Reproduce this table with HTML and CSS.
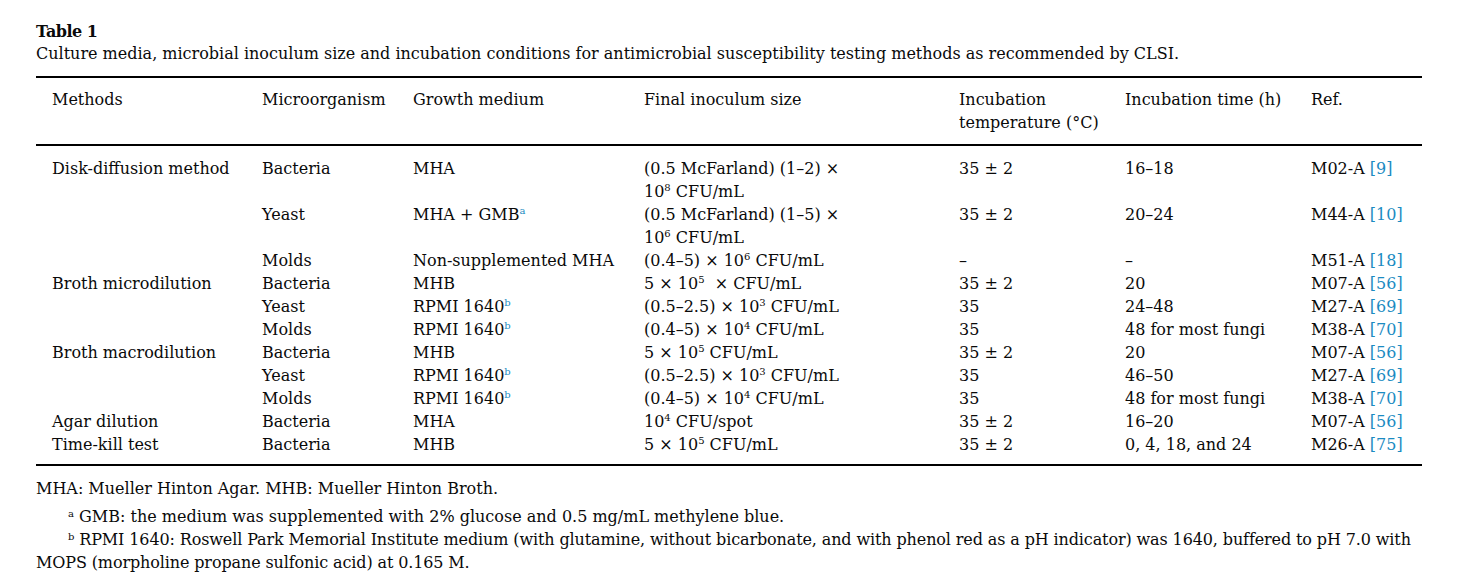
FILE: index.html
```html
<!DOCTYPE html>
<html lang="en">
<head>
<meta charset="utf-8">
<title>Table 1</title>
<link rel="stylesheet" href="styles.css">
</head>
<body>
<div class="page">
  <div class="title">Table 1</div>
  <div class="caption">Culture media, microbial inoculum size and incubation conditions for antimicrobial susceptibility testing methods as recommended by CLSI.</div>
  <table class="tbl">
    <colgroup>
      <col class="c1"><col class="c2"><col class="c3"><col class="c4"><col class="c5"><col class="c6"><col class="c7">
    </colgroup>
    <thead>
      <tr>
        <th class="first">Methods</th>
        <th>Microorganism</th>
        <th>Growth medium</th>
        <th>Final inoculum size</th>
        <th>Incubation<br>temperature (°C)</th>
        <th>Incubation time (h)</th>
        <th>Ref.</th>
      </tr>
    </thead>
    <tbody>
      <tr class="top">
        <td class="first">Disk-diffusion method</td>
        <td>Bacteria</td>
        <td>MHA</td>
        <td>(0.5 McFarland) (1–2) ×<br>10<sup>8</sup> CFU/mL</td>
        <td>35 ± 2</td>
        <td>16–18</td>
        <td>M02-A <span class="ref">[9]</span></td>
      </tr>
      <tr>
        <td class="first"></td>
        <td>Yeast</td>
        <td>MHA + GMB<sup class="fn">a</sup></td>
        <td>(0.5 McFarland) (1–5) ×<br>10<sup>6</sup> CFU/mL</td>
        <td>35 ± 2</td>
        <td>20–24</td>
        <td>M44-A <span class="ref">[10]</span></td>
      </tr>
      <tr>
        <td class="first"></td>
        <td>Molds</td>
        <td>Non-supplemented MHA</td>
        <td>(0.4–5) × 10<sup>6</sup> CFU/mL</td>
        <td>–</td>
        <td>–</td>
        <td>M51-A <span class="ref">[18]</span></td>
      </tr>
      <tr>
        <td class="first">Broth microdilution</td>
        <td>Bacteria</td>
        <td>MHB</td>
        <td>5 × 10<sup>5</sup>&nbsp; × CFU/mL</td>
        <td>35 ± 2</td>
        <td>20</td>
        <td>M07-A <span class="ref">[56]</span></td>
      </tr>
      <tr>
        <td class="first"></td>
        <td>Yeast</td>
        <td>RPMI 1640<sup class="fn">b</sup></td>
        <td>(0.5–2.5) × 10<sup>3</sup> CFU/mL</td>
        <td>35</td>
        <td>24–48</td>
        <td>M27-A <span class="ref">[69]</span></td>
      </tr>
      <tr>
        <td class="first"></td>
        <td>Molds</td>
        <td>RPMI 1640<sup class="fn">b</sup></td>
        <td>(0.4–5) × 10<sup>4</sup> CFU/mL</td>
        <td>35</td>
        <td>48 for most fungi</td>
        <td>M38-A <span class="ref">[70]</span></td>
      </tr>
      <tr>
        <td class="first">Broth macrodilution</td>
        <td>Bacteria</td>
        <td>MHB</td>
        <td>5 × 10<sup>5</sup> CFU/mL</td>
        <td>35 ± 2</td>
        <td>20</td>
        <td>M07-A <span class="ref">[56]</span></td>
      </tr>
      <tr>
        <td class="first"></td>
        <td>Yeast</td>
        <td>RPMI 1640<sup class="fn">b</sup></td>
        <td>(0.5–2.5) × 10<sup>3</sup> CFU/mL</td>
        <td>35</td>
        <td>46–50</td>
        <td>M27-A <span class="ref">[69]</span></td>
      </tr>
      <tr>
        <td class="first"></td>
        <td>Molds</td>
        <td>RPMI 1640<sup class="fn">b</sup></td>
        <td>(0.4–5) × 10<sup>4</sup> CFU/mL</td>
        <td>35</td>
        <td>48 for most fungi</td>
        <td>M38-A <span class="ref">[70]</span></td>
      </tr>
      <tr>
        <td class="first">Agar dilution</td>
        <td>Bacteria</td>
        <td>MHA</td>
        <td>10<sup>4</sup> CFU/spot</td>
        <td>35 ± 2</td>
        <td>16–20</td>
        <td>M07-A <span class="ref">[56]</span></td>
      </tr>
      <tr class="last">
        <td class="first">Time-kill test</td>
        <td>Bacteria</td>
        <td>MHB</td>
        <td>5 × 10<sup>5</sup> CFU/mL</td>
        <td>35 ± 2</td>
        <td>0, 4, 18, and 24</td>
        <td>M26-A <span class="ref">[75]</span></td>
      </tr>
    </tbody>
  </table>
  <div class="notes">
    <p class="note-main">MHA: Mueller Hinton Agar. MHB: Mueller Hinton Broth.</p>
    <p class="note"><sup>a</sup> GMB: the medium was supplemented with 2% glucose and 0.5 mg/mL methylene blue.</p>
    <p class="note tight"><sup>b</sup> RPMI 1640: Roswell Park Memorial Institute medium (with glutamine, without bicarbonate, and with phenol red as a pH indicator) was 1640, buffered to pH 7.0 with<br>MOPS (morpholine propane sulfonic acid) at 0.165 M.</p>
  </div>
</div>
</body>
</html>
```

FILE: styles.css
```css
html, body {
  margin: 0;
  padding: 0;
  background: #ffffff;
}
body {
  font-family: "DejaVu Serif", "Liberation Serif", serif;
  color: #0a0a0a;
  font-size: 16px;
}
.page {
  padding: 21px 0 0 36px;
  width: 1386px;
}
.title {
  font-weight: bold;
  font-size: 16px;
  letter-spacing: -0.5px;
  line-height: 22px;
}
.caption {
  line-height: 22px;
  margin-bottom: 11px;
}
.tbl {
  width: 1386px;
  border-collapse: collapse;
  table-layout: fixed;
  border-top: 2px solid #000;
  border-bottom: 2px solid #000;
}
.c1 { width: 226px; }
.c2 { width: 151px; }
.c3 { width: 231px; }
.c4 { width: 315px; }
.c5 { width: 166px; }
.c6 { width: 186px; }
.c7 { width: 111px; }
.tbl th, .tbl td {
  text-align: left;
  font-weight: normal;
  vertical-align: top;
  padding: 0;
  line-height: 23px;
  white-space: nowrap;
}
.tbl th.first, .tbl td.first {
  padding-left: 16px;
}
.tbl thead th {
  padding-top: 10px;
  padding-bottom: 10px;
  border-bottom: 2px solid #000;
}
.tbl tbody tr.top td {
  padding-top: 11px;
}
.tbl tbody tr.last td {
  padding-bottom: 8px;
}
sup {
  font-size: 10px;
  line-height: 0;
  vertical-align: 6px;
}
sup.fn, .ref {
  color: #1b8bc2;
}
.notes {
  margin-top: 11px;
}
.notes p {
  margin: 0;
  line-height: 23px;
}
.note-main {
  margin-bottom: 5px !important;
}
.note {
  text-indent: 32px;
}
.note.tight {
  letter-spacing: -0.12px;
}
.note sup {
  color: #0a0a0a;
  vertical-align: 5px;
}
```
